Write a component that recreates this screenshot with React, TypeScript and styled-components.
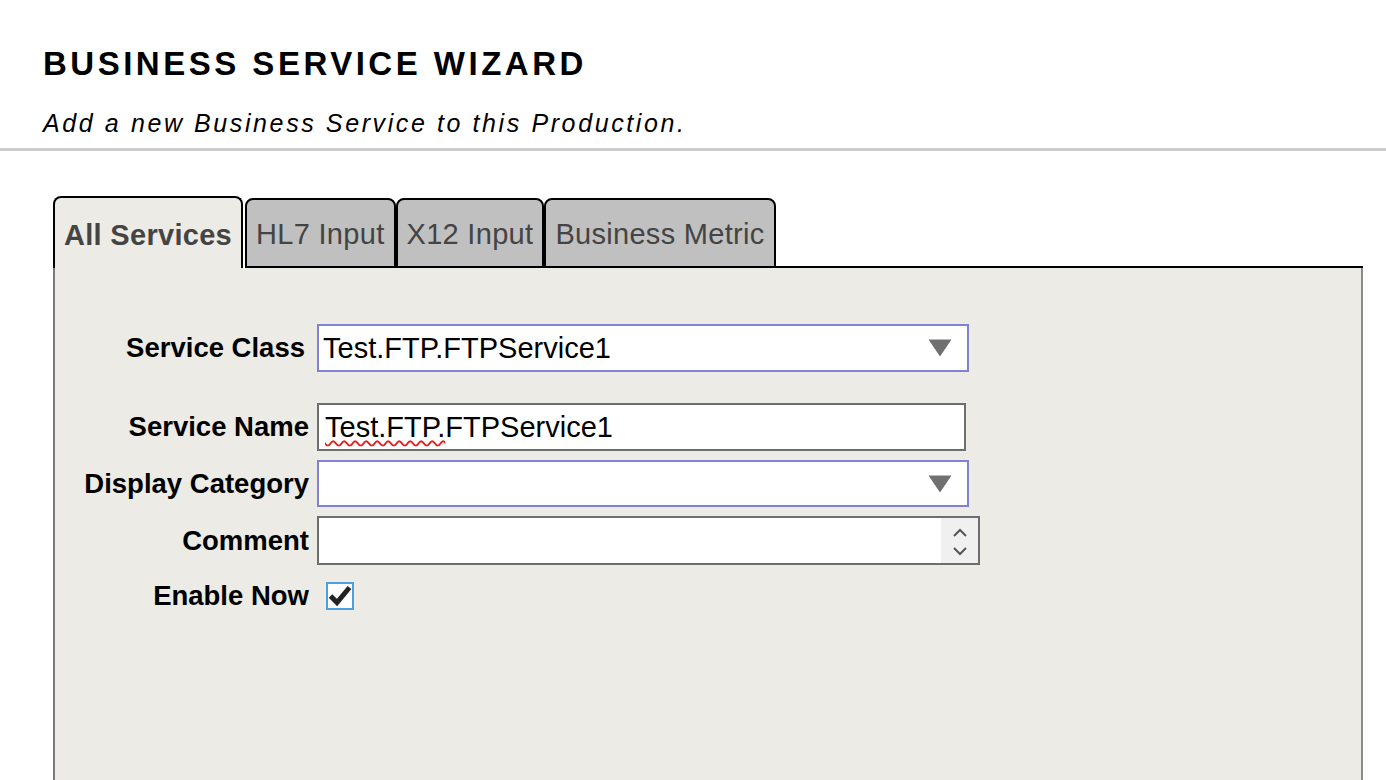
import styled, { createGlobalStyle } from 'styled-components'

const GlobalStyle = createGlobalStyle`
  html, body {
    margin: 0;
    padding: 0;
    background: #fff;
    overflow: hidden;
  }
  body {
    font-family: "Liberation Sans", Arial, sans-serif;
    color: #000;
  }
`

const tabs = ['All Services', 'HL7 Input', 'X12 Input', 'Business Metric']

function DownTriangle() {
  return (
    <Arrow width="24" height="18" viewBox="0 0 24 18">
      <path d="M0.5 0.5 L23.5 0.5 L12 17.5 Z" fill="#707070" />
    </Arrow>
  )
}

function Spinner() {
  return (
    <Scroll>
      <svg width="16" height="40" viewBox="0 0 16 40">
        <path d="M2 15 L8 9 L14 15" fill="none" stroke="#555" strokeWidth="2" />
        <path d="M2 27 L8 33 L14 27" fill="none" stroke="#555" strokeWidth="2" />
      </svg>
    </Scroll>
  )
}

function CheckMark() {
  return (
    <svg width="24" height="24" viewBox="0 0 24 24">
      <path d="M2.5 12 L9 18.5 L21.5 3.5" fill="none" stroke="#222" strokeWidth="5" strokeLinejoin="miter" />
    </svg>
  )
}

function App() {
  return (
    <Page>
      <GlobalStyle />
      <Header>
        <Title>BUSINESS SERVICE WIZARD</Title>
        <Subtitle>Add a new Business Service to this Production.</Subtitle>
      </Header>
      <Body>
        <TabStrip>
          {tabs.map((t, i) => (
            <Tab key={t} $active={i === 0}>
              {t}
            </Tab>
          ))}
          <TabFiller />
        </TabStrip>
        <Panel>
          <Form>
            <Row $after={22}>
              <Label $pad={4}>Service Class</Label>
              <Select $width={652}>
                <FieldText>Test.FTP.FTPService1</FieldText>
                <DownTriangle />
              </Select>
            </Row>
            <Row>
              <Label>Service Name</Label>
              <TextField $width={649}>
                <FieldText>
                  <Misspelled>Test.FTP.</Misspelled>FTPService1
                </FieldText>
              </TextField>
            </Row>
            <Row>
              <Label>Display Category</Label>
              <Select $width={652} $height={47}>
                <FieldText />
                <DownTriangle />
              </Select>
            </Row>
            <Row $after={6}>
              <Label>Comment</Label>
              <TextArea>
                <FieldText />
                <Spinner />
              </TextArea>
            </Row>
            <Row>
              <Label>Enable Now</Label>
              <CheckBox>
                <CheckMark />
              </CheckBox>
            </Row>
          </Form>
        </Panel>
      </Body>
    </Page>
  )
}

export default App

const Page = styled.div`
  width: 1386px;
  height: 780px;
  overflow: hidden;
`

const Header = styled.div`
  padding: 47px 0 12px 43px;
  border-bottom: 3px solid #cccccc;
`

const Title = styled.h1`
  margin: 0;
  font-size: 33px;
  line-height: 33px;
  font-weight: bold;
  letter-spacing: 3.5px;
`

const Subtitle = styled.p`
  margin: 31px 0 0;
  font-size: 25px;
  line-height: 25px;
  font-style: italic;
  letter-spacing: 2.6px;
`

const Body = styled.div`
  margin: 45px 0 0 53px;
  width: 1310px;
`

const TabStrip = styled.div`
  display: flex;
  align-items: flex-end;
  height: 72px;
`

const Tab = styled.div<{ $active?: boolean }>`
  height: ${(p) => (p.$active ? 72 : 70)}px;
  box-sizing: border-box;
  padding: 0 9px;
  margin-right: ${(p) => (p.$active ? 2 : 0)}px;
  display: flex;
  align-items: center;
  padding-top: ${(p) => (p.$active ? 4 : 2)}px;
  border: 2px solid #000;
  border-bottom: ${(p) => (p.$active ? 'none' : '2px solid #000')};
  border-radius: 8px 8px 0 0;
  background: ${(p) => (p.$active ? '#ecebe5' : '#c0c0c0')};
  color: #444;
  font-size: 29px;
  letter-spacing: 0.3px;
  font-weight: ${(p) => (p.$active ? 'bold' : 'normal')};
  white-space: nowrap;
`

const TabFiller = styled.div`
  flex: 1;
  border-bottom: 2px solid #000;
  margin-left: -1px;
`

const Panel = styled.div`
  height: 560px;
  background: #ecebe5;
  border-left: 2px solid #7a7a7a;
  border-right: 2px solid #8a8a8a;
  padding-top: 56px;
  box-sizing: border-box;
`

const Form = styled.div`
  display: flex;
  flex-direction: column;
  gap: 9px;
`

const Row = styled.div<{ $after?: number }>`
  display: grid;
  grid-template-columns: 254px auto;
  column-gap: 8px;
  align-items: center;
  margin-bottom: ${(p) => p.$after ?? 0}px;
`

const Label = styled.div<{ $pad?: number }>`
  text-align: right;
  font-size: 27.5px;
  font-weight: bold;
  padding-right: ${(p) => p.$pad ?? 0}px;
  white-space: nowrap;
`

const Select = styled.div<{ $width: number; $height?: number }>`
  width: ${(p) => p.$width}px;
  height: ${(p) => p.$height ?? 48}px;
  box-sizing: border-box;
  border: 2px solid #8282d2;
  background: #fff;
  display: flex;
  align-items: center;
  padding: 0 15px 0 4px;
`

const TextField = styled.div<{ $width: number }>`
  width: ${(p) => p.$width}px;
  height: 48px;
  box-sizing: border-box;
  border: 2px solid #6e6e6e;
  background: #fff;
  display: flex;
  align-items: center;
  padding: 0 6px;
`

const TextArea = styled.div`
  width: 663px;
  height: 49px;
  box-sizing: border-box;
  border: 2px solid #6e6e6e;
  background: #fff;
  display: flex;
  align-items: stretch;
`

const Scroll = styled.div`
  width: 37px;
  background: #f0f0f0;
  display: flex;
  align-items: center;
  justify-content: center;
`

const FieldText = styled.div`
  flex: 1;
  font-size: 29px;
  color: #000;
  white-space: nowrap;
`

const Misspelled = styled.span`
  text-decoration: underline wavy #e02020;
  text-decoration-thickness: 1.5px;
  text-underline-offset: 3px;
  text-decoration-skip-ink: none;
`

const Arrow = styled.svg`
  flex: none;
`

const CheckBox = styled.div`
  margin-left: 9px;
  width: 28px;
  height: 28px;
  box-sizing: border-box;
  border: 2px solid #4a9fdc;
  background: #fff;
  display: flex;
  align-items: center;
  justify-content: center;
`
